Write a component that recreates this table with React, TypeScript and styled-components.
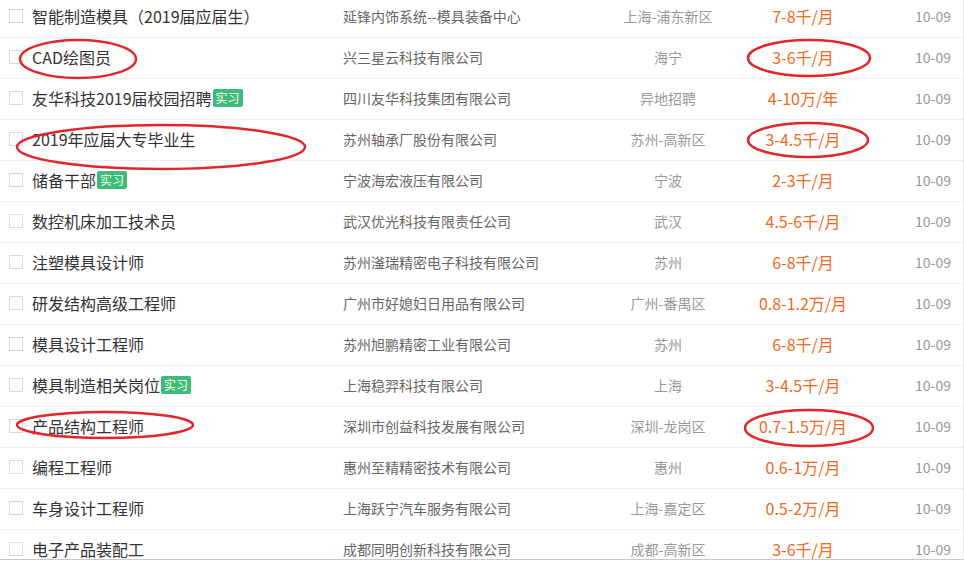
import React from "react";
import styled, { createGlobalStyle } from "styled-components";

const GlobalStyle = createGlobalStyle`
  html, body { margin: 0; padding: 0; background: #fff; }
  body { font-family: "Microsoft YaHei", "Noto Sans CJK SC", "Noto Sans", sans-serif; }
  * { box-sizing: border-box; }
`;

type Job = {
  title: string;
  intern?: boolean;
  company: string;
  location: string;
  salary: string;
  date: string;
};

const jobs: Job[] = [
  { title: "智能制造模具（2019届应届生）", company: "延锋内饰系统--模具装备中心", location: "上海-浦东新区", salary: "7-8千/月", date: "10-09" },
  { title: "CAD绘图员", company: "兴三星云科技有限公司", location: "海宁", salary: "3-6千/月", date: "10-09" },
  { title: "友华科技2019届校园招聘", intern: true, company: "四川友华科技集团有限公司", location: "异地招聘", salary: "4-10万/年", date: "10-09" },
  { title: "2019年应届大专毕业生", company: "苏州轴承厂股份有限公司", location: "苏州-高新区", salary: "3-4.5千/月", date: "10-09" },
  { title: "储备干部", intern: true, company: "宁波海宏液压有限公司", location: "宁波", salary: "2-3千/月", date: "10-09" },
  { title: "数控机床加工技术员", company: "武汉优光科技有限责任公司", location: "武汉", salary: "4.5-6千/月", date: "10-09" },
  { title: "注塑模具设计师", company: "苏州滏瑞精密电子科技有限公司", location: "苏州", salary: "6-8千/月", date: "10-09" },
  { title: "研发结构高级工程师", company: "广州市好媳妇日用品有限公司", location: "广州-番禺区", salary: "0.8-1.2万/月", date: "10-09" },
  { title: "模具设计工程师", company: "苏州旭鹏精密工业有限公司", location: "苏州", salary: "6-8千/月", date: "10-09" },
  { title: "模具制造相关岗位", intern: true, company: "上海稳羿科技有限公司", location: "上海", salary: "3-4.5千/月", date: "10-09" },
  { title: "产品结构工程师", company: "深圳市创益科技发展有限公司", location: "深圳-龙岗区", salary: "0.7-1.5万/月", date: "10-09" },
  { title: "编程工程师", company: "惠州至精精密技术有限公司", location: "惠州", salary: "0.6-1万/月", date: "10-09" },
  { title: "车身设计工程师", company: "上海跃宁汽车服务有限公司", location: "上海-嘉定区", salary: "0.5-2万/月", date: "10-09" },
  { title: "电子产品装配工", company: "成都同明创新科技有限公司", location: "成都-高新区", salary: "3-6千/月", date: "10-09" },
];

const marks = [
  { cx: 78, cy: 59, rx: 58, ry: 19 },
  { cx: 809, cy: 58, rx: 61, ry: 18 },
  { cx: 161, cy: 147, rx: 144, ry: 22 },
  { cx: 808, cy: 140, rx: 60, ry: 17 },
  { cx: 105, cy: 425, rx: 88, ry: 13 },
  { cx: 809, cy: 428, rx: 64, ry: 18 },
];

const Page = styled.div`
  position: relative;
  width: 964px;
  height: 561px;
  overflow: hidden;
  background: #fff;
`;

const Frame = styled.div`
  height: 560px;
  overflow: hidden;
  border-bottom: 1px solid #c9c9c9;
  border-right: 1px solid #eeeeee;
`;

const List = styled.ul`
  list-style: none;
  margin: -3px 0 0;
  padding: 0;
`;

const Row = styled.li`
  display: grid;
  grid-template-columns: 32px 311px 257px 136px 134px 1fr;
  align-items: center;
  height: 41px;
  padding-bottom: 2px;
  border-bottom: 1px dotted #dcdcdc;
`;

const CheckCell = styled.div`
  display: flex;
  align-items: center;
  padding-left: 9px;
`;

const CheckBox = styled.span`
  display: block;
  width: 14px;
  height: 14px;
  border: 1px solid #dadada;
  background: #fff;
`;

const Title = styled.div`
  display: flex;
  align-items: center;
  font-size: 16px;
  color: #333;
  white-space: nowrap;
`;

const Badge = styled.span`
  display: inline-flex;
  align-items: center;
  justify-content: center;
  height: 18px;
  padding: 0 3px;
  margin-left: 1px;
  border-radius: 2px;
  background: #3dbb78;
  color: #fff;
  font-size: 12px;
  line-height: 18px;
`;

const Company = styled.div`
  font-size: 14px;
  color: #666;
  white-space: nowrap;
`;

const Location = styled.div`
  font-size: 14px;
  color: #999;
  text-align: center;
  white-space: nowrap;
`;

const Salary = styled.div`
  font-size: 16px;
  color: #f26a22;
  text-align: center;
  white-space: nowrap;
`;

const DateCell = styled.div`
  font-size: 14px;
  color: #999;
  padding-left: 45px;
  white-space: nowrap;
`;

const Overlay = styled.svg`
  position: absolute;
  left: 0;
  top: 0;
  pointer-events: none;
`;

export default function App() {
  return (
    <Page>
      <GlobalStyle />
      <Frame>
        <List>
          {jobs.map((j, i) => (
            <Row key={i}>
              <CheckCell>
                <CheckBox />
              </CheckCell>
              <Title>
                {j.title}
                {j.intern && <Badge>实习</Badge>}
              </Title>
              <Company>{j.company}</Company>
              <Location>{j.location}</Location>
              <Salary>{j.salary}</Salary>
              <DateCell>{j.date}</DateCell>
            </Row>
          ))}
        </List>
      </Frame>
      <Overlay width={964} height={561} viewBox="0 0 964 561">
        {marks.map((m, i) => (
          <ellipse
            key={i}
            cx={m.cx}
            cy={m.cy}
            rx={m.rx}
            ry={m.ry}
            fill="none"
            stroke="#e2262b"
            strokeWidth={2.5}
          />
        ))}
      </Overlay>
    </Page>
  );
}
